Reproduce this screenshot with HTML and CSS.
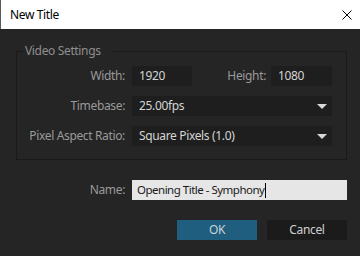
FILE: index.html
```html
<!DOCTYPE html>
<html>
<head>
<meta charset="utf-8">
<link rel="stylesheet" href="styles.css">
</head>
<body>
<div class="window">
  <div class="titlebar">
    <span class="title">New Title</span>
    <svg class="close" width="10" height="10" viewBox="0 0 10 10"><path d="M0.5 0.5 L9.5 9.5 M9.5 0.5 L0.5 9.5" stroke="#000" stroke-width="1" fill="none"/></svg>
  </div>
  <div class="content">
    <fieldset class="group">
      <legend class="legend">Video Settings</legend>
      <div class="rows">
        <div class="row">
          <span class="label">Width:</span>
          <div class="field w-small">1920</div>
          <span class="label label-height">Height:</span>
          <div class="field w-height">1080</div>
        </div>
        <div class="row">
          <span class="label">Timebase:</span>
          <div class="field select">25.00fps<span class="arrow"></span></div>
        </div>
        <div class="row">
          <span class="label">Pixel Aspect Ratio:</span>
          <div class="field select">Square Pixels (1.0)<span class="arrow"></span></div>
        </div>
      </div>
    </fieldset>
    <div class="name-row">
      <span class="label">Name:</span>
      <div class="name-input">Opening Title - Symphony<span class="caret"></span></div>
    </div>
    <div class="buttons">
      <div class="btn btn-ok">OK</div>
      <div class="btn btn-cancel">Cancel</div>
    </div>
  </div>
</div>
</body>
</html>
```

FILE: styles.css
```css
* { box-sizing: border-box; }
html, body {
  margin: 0;
  padding: 0;
  background: #252525;
}
body {
  font-family: "Noto Sans", "Open Sans", sans-serif;
  font-size: 12px;
  letter-spacing: -0.35px;
}
.window {
  width: 360px;
  height: 256px;
  background: #252525;
  overflow: hidden;
}
.titlebar {
  height: 29px;
  background: #ffffff;
  border-left: 1px solid #5a5a5a;
  display: flex;
  align-items: center;
  justify-content: space-between;
  padding: 0 8px 0 9px;
}
.title {
  color: #000;
  font-size: 12px;
  line-height: 16px;
}
.close {
  display: block;
}
.content {
  padding: 14px 13px 0 16px;
}
.group {
  margin: 0;
  padding: 0 0 13px 0;
  border: 1px solid #1a1a1a;
  width: 331px;
  min-width: 0;
}
.legend {
  margin-left: 7px;
  padding: 0 12px 0 1px;
  color: #8f8f8f;
  line-height: 16px;
}
.rows {
  display: flex;
  flex-direction: column;
  gap: 10px;
  padding-top: 7px;
}
.row {
  display: flex;
  align-items: center;
  height: 20px;
}
.label {
  color: #9a9a9a;
  width: 108px;
  text-align: right;
  flex: none;
  line-height: 20px;
}
.field {
  height: 20px;
  background: #1e1e1e;
  color: #d4d4d4;
  line-height: 20px;
  padding-left: 7px;
  margin-left: 7px;
  flex: none;
}
.w-small { width: 60px; }
.label-height { width: 74px; }
.w-height { width: 61px; margin-left: 5px; }
.select {
  width: 200px;
  display: flex;
  align-items: center;
  justify-content: space-between;
  padding-right: 5px;
}
.arrow {
  width: 0;
  height: 0;
  border-left: 5px solid transparent;
  border-right: 5px solid transparent;
  border-top: 5px solid #d8d8d8;
}
.name-row {
  display: flex;
  align-items: center;
  margin-top: 20px;
  padding-left: 1px;
}
.name-input {
  margin-left: 7px;
  width: 215px;
  height: 20px;
  background: #e6e6e6;
  color: #1a1a1a;
  line-height: 20px;
  padding-left: 5px;
  display: flex;
  align-items: center;
  font-size: 11.5px;
  letter-spacing: -0.5px;
}
.caret {
  display: inline-block;
  width: 1px;
  height: 15px;
  background: #000;
  margin-left: 1px;
}
.buttons {
  display: flex;
  justify-content: flex-end;
  gap: 10px;
  margin-top: 20px;
}
.btn {
  width: 80px;
  height: 20px;
  line-height: 20px;
  text-align: center;
}
.btn-ok {
  background: #1f5e7e;
  color: #c9d3d9;
}
.btn-cancel {
  background: #1b1b1b;
  color: #cfcfcf;
}
```
